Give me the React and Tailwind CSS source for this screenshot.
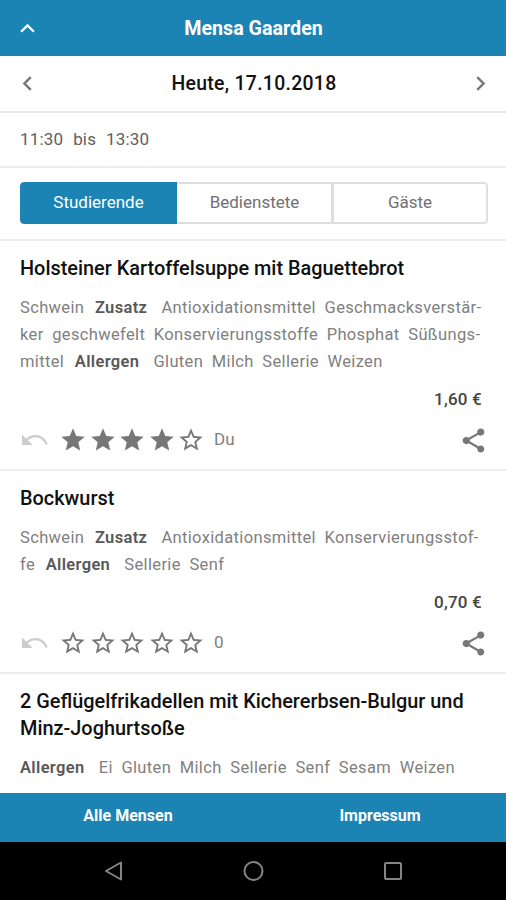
import React from "react";
import {
  MdChevronLeft,
  MdChevronRight,
  MdExpandLess,
  MdShare,
  MdStar,
  MdStarBorder,
} from "react-icons/md";

const dishes = [
  {
    title: ["Holsteiner Kartoffelsuppe mit Baguettebrot"],
    lines: [
      ["Schwein ", <Label key="z">Zusatz</Label>, " Antioxidationsmittel Geschmacksverstär-"],
      ["ker geschwefelt Konservierungsstoffe Phosphat Süßungs-"],
      ["mittel ", <Label key="a">Allergen</Label>, " Gluten Milch Sellerie Weizen"],
    ],
    price: "1,60 €",
    stars: 4,
    rating: "Du",
  },
  {
    title: ["Bockwurst"],
    lines: [
      ["Schwein ", <Label key="z">Zusatz</Label>, " Antioxidationsmittel Konservierungsstof-"],
      ["fe ", <Label key="a">Allergen</Label>, " Sellerie Senf"],
    ],
    price: "0,70 €",
    stars: 0,
    rating: "0",
  },
  {
    title: ["2 Geflügelfrikadellen mit Kichererbsen-Bulgur und", "Minz-Joghurtsoße"],
    lines: [[<Label key="a">Allergen</Label>, " Ei Gluten Milch Sellerie Senf Sesam Weizen"]],
  },
];

function Label({ children }) {
  return <b className="mr-[5.500px] ml-[2px] font-semibold text-[#585858] [.first_&]:ml-0">{children}</b>;
}

function UndoIcon() {
  return (
    <svg width="26" height="12" viewBox="0 0 26 12" className="ml-[2px] shrink-0 text-[#cccccc]">
      <path d="M0 0.500V11H10.500Z" fill="currentColor" />
      <path d="M4.500 6Q8.500 2.100 13.500 2.100Q21 2.100 24.800 10.500" fill="none" stroke="currentColor" strokeWidth="2.200" />
    </svg>
  );
}

function Rating({ stars, text }) {
  return (
    <div className="mt-[13px] flex h-7 items-center">
      <UndoIcon />
      <div className="ml-[11px] flex gap-[1.5px] text-[#777]">
        {[1, 2, 3, 4, 5].map((n) =>
          n <= stars ? <MdStar key={n} size={28} /> : <MdStarBorder key={n} size={28} />
        )}
      </div>
      <span className="ml-[9px] text-[17px] text-[#808080]">{text}</span>
      <MdShare className="ml-auto h-[29px] w-[29px] text-[#777]" />
    </div>
  );
}

function Dish({ dish }) {
  return (
    <section className="border-b-2 border-[#ececec] pt-[13.5px] pr-[18px] pb-[15px] pl-5 whitespace-nowrap last:border-b-0">
      <h2 className="text-[19.9px] leading-[27px] font-medium text-[#111]">
        {dish.title.map((t) => (
          <div key={t}>{t}</div>
        ))}
      </h2>
      <div className="mt-[12.5px] text-[16.5px] leading-[27px] tracking-[0.35px] text-[#808080] [word-spacing:4.2px]">
        {dish.lines.map((line, i) => (
          <div key={i} className={typeof line[0] === "string" ? "" : "first"}>
            {line}
          </div>
        ))}
      </div>
      {dish.price && (
        <>
          <div className="mt-[11px] pr-[6px] text-right text-[17px] leading-[27px] font-medium tracking-[0.2px] text-[#444]">
            {dish.price}
          </div>
          <Rating stars={dish.stars} text={dish.rating} />
        </>
      )}
    </section>
  );
}

export default function App() {
  return (
    <div className="flex h-[900px] w-[506px] flex-col overflow-hidden bg-white font-[Roboto,sans-serif]">
      <header className="grid h-14 shrink-0 grid-cols-[56px_1fr_56px] items-center bg-[#1b84b5] text-white">
        <MdExpandLess className="mt-px ml-[13px]" size={29} />
        <h1 className="pt-px pl-px text-center text-[19.7px] font-bold">Mensa Gaarden</h1>
      </header>
      <div className="grid h-[57px] shrink-0 grid-cols-[56px_1fr_56px] items-center border-b-2 border-[#e8e8e8]">
        <MdChevronLeft className="ml-[13px] text-[#777]" size={29} />
        <div className="pt-px pl-[2px] text-center text-[19.4px] font-medium tracking-[0.3px] text-[#111]">
          Heute, 17.10.2018
        </div>
        <MdChevronRight className="ml-4 text-[#777]" size={29} />
      </div>
      <div className="flex h-[55px] shrink-0 items-center border-b-2 border-[#ececec] pl-5 text-[17px] tracking-[0.15px] text-[#606060] [word-spacing:5.7px]">
        11:30 bis 13:30
      </div>
      <div className="h-[73px] shrink-0 border-b-2 border-[#ececec] pt-[14px] pr-[18px] pl-5">
        <div className="flex h-[42px] overflow-hidden rounded-[4px] text-[17px] text-[#707070]">
          <div className="flex w-[157px] items-center justify-center rounded-l-[4px] bg-[#1b84b5] text-white">
            Studierende
          </div>
          <div className="flex w-[157px] items-center justify-center border-y-2 border-r-[3px] border-[#dedede] pl-px">
            Bedienstete
          </div>
          <div className="flex flex-1 items-center justify-center rounded-r-[4px] border-y-2 border-r-2 border-[#dedede]">
            Gäste
          </div>
        </div>
      </div>
      <main className="min-h-0 flex-1 overflow-hidden">
        {dishes.map((d) => (
          <Dish key={d.title[0]} dish={d} />
        ))}
      </main>
      <footer className="grid h-[49px] shrink-0 grid-cols-2 items-center bg-[#1b84b5] pb-[3px] pl-[2px] text-center text-[16px] font-bold text-white">
        <span>Alle Mensen</span>
        <span>Impressum</span>
      </footer>
      <nav className="flex h-[58px] shrink-0 items-center justify-center bg-black">
        <svg width="320" height="24" viewBox="0 0 320 24" fill="none" stroke="#858585" strokeWidth="2">
          <path d="M28 3.5V20.500L13 12Z" strokeLinejoin="round" />
          <circle cx="160.500" cy="12" r="9" />
          <rect x="292" y="4" width="16" height="16" rx="1" />
        </svg>
      </nav>
    </div>
  );
}
